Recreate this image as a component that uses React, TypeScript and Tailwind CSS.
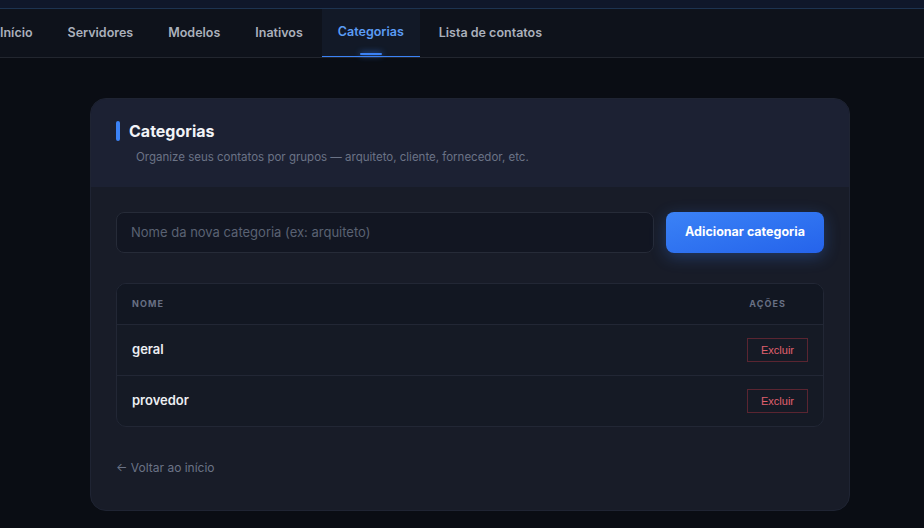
import React from "react";

const tabs = ["Início", "Servidores", "Modelos", "Inativos", "Categorias", "Lista de contatos"];
const rows = ["geral", "provedor"];

export default function App() {
  return (
    <div
      className="min-h-[528px] w-full bg-[#0a0d14] overflow-hidden"
      style={{ fontFamily: "Inter, 'Noto Sans', sans-serif" }}
    >
      <div className="h-[8px] bg-[#0f172a]" />
      <div className="h-px bg-[#1d3350]" />
      <nav className="h-[49px] bg-[#0e121b] border-b border-[#22262f] flex">
        <div className="flex gap-[3px] ml-[-16px]">
          {tabs.map((t) => {
            const active = t === "Categorias";
            return (
              <div
                key={t}
                className={
                  active
                    ? "relative h-[48px] px-4 flex items-center text-[12.5px] font-semibold text-[#5b9cf5] bg-[#121927] border-b border-[#3b82f6]"
                    : "relative h-[48px] px-4 flex items-center text-[12.5px] font-semibold text-[#aab0bc]"
                }
              >
                {t}
                {active && (
                  <span className="absolute left-1/2 -translate-x-1/2 bottom-[1px] w-[22px] h-[2px] rounded-full bg-[#3b82f6] shadow-[0_0_6px_#3b82f6]" />
                )}
              </div>
            );
          })}
        </div>
      </nav>

      <div className="ml-[90px] mt-[40px] w-[760px] rounded-[16px] overflow-hidden bg-[#181c28] border border-[#1f2433]">
        <div className="bg-[#1c2133] px-[25px] pt-[22px] pb-[22px]">
          <div className="flex items-center gap-[9px]">
            <span className="w-[4px] h-[20px] rounded-full bg-[#3b82f6]" />
            <h1 className="text-[16px] font-bold text-[#f1f3f7] leading-[20px]">Categorias</h1>
          </div>
          <p className="ml-[20px] mt-[8px] text-[11.5px] text-[#6b7386] leading-[16px]">
            Organize seus contatos por grupos — arquiteto, cliente, fornecedor, etc.
          </p>
        </div>

        <div className="px-[25px] pt-[25px] pb-[33px]">
          <div className="flex gap-[12px]">
            <div className="flex-1 h-[41px] rounded-[8px] bg-[#121622] border border-[#262b38] flex items-center px-[14px]">
              <span className="text-[13px] text-[#5a6273]">Nome da nova categoria (ex: arquiteto)</span>
            </div>
            <button className="w-[158px] h-[41px] rounded-[8px] bg-gradient-to-br from-[#3b82f6] to-[#2563eb] text-white text-[12.5px] font-bold shadow-[0_4px_16px_rgba(59,130,246,0.3)]">
              Adicionar categoria
            </button>
          </div>

          <div className="mt-[30px] rounded-[10px] border border-[#222735] bg-[#151a25] overflow-hidden">
            <div className="h-[41px] bg-[#121722] border-b border-[#222735] flex items-center justify-between px-[15px]">
              <span className="text-[9px] font-bold tracking-[0.12em] text-[#687084]">NOME</span>
              <span className="text-[9px] font-bold tracking-[0.12em] text-[#687084] mr-[22px]">AÇÕES</span>
            </div>
            {rows.map((r, i) => (
              <div
                key={r}
                className={
                  i === 0
                    ? "h-[51px] flex items-center justify-between px-[15px] border-b border-[#222735]"
                    : "h-[50px] flex items-center justify-between px-[15px]"
                }
              >
                <span className="text-[13px] font-semibold text-[#eceef2]">{r}</span>
                <button
                  className="w-[61px] h-[24px] border border-[#5a2531] text-[#e0606e] text-[11px]"
                  style={{ fontFamily: "'Liberation Sans', Arial, sans-serif" }}
                >
                  Excluir
                </button>
              </div>
            ))}
          </div>

          <div className="mt-[32px] text-[12px] text-[#6b7386]">← Voltar ao início</div>
        </div>
      </div>
    </div>
  );
}
